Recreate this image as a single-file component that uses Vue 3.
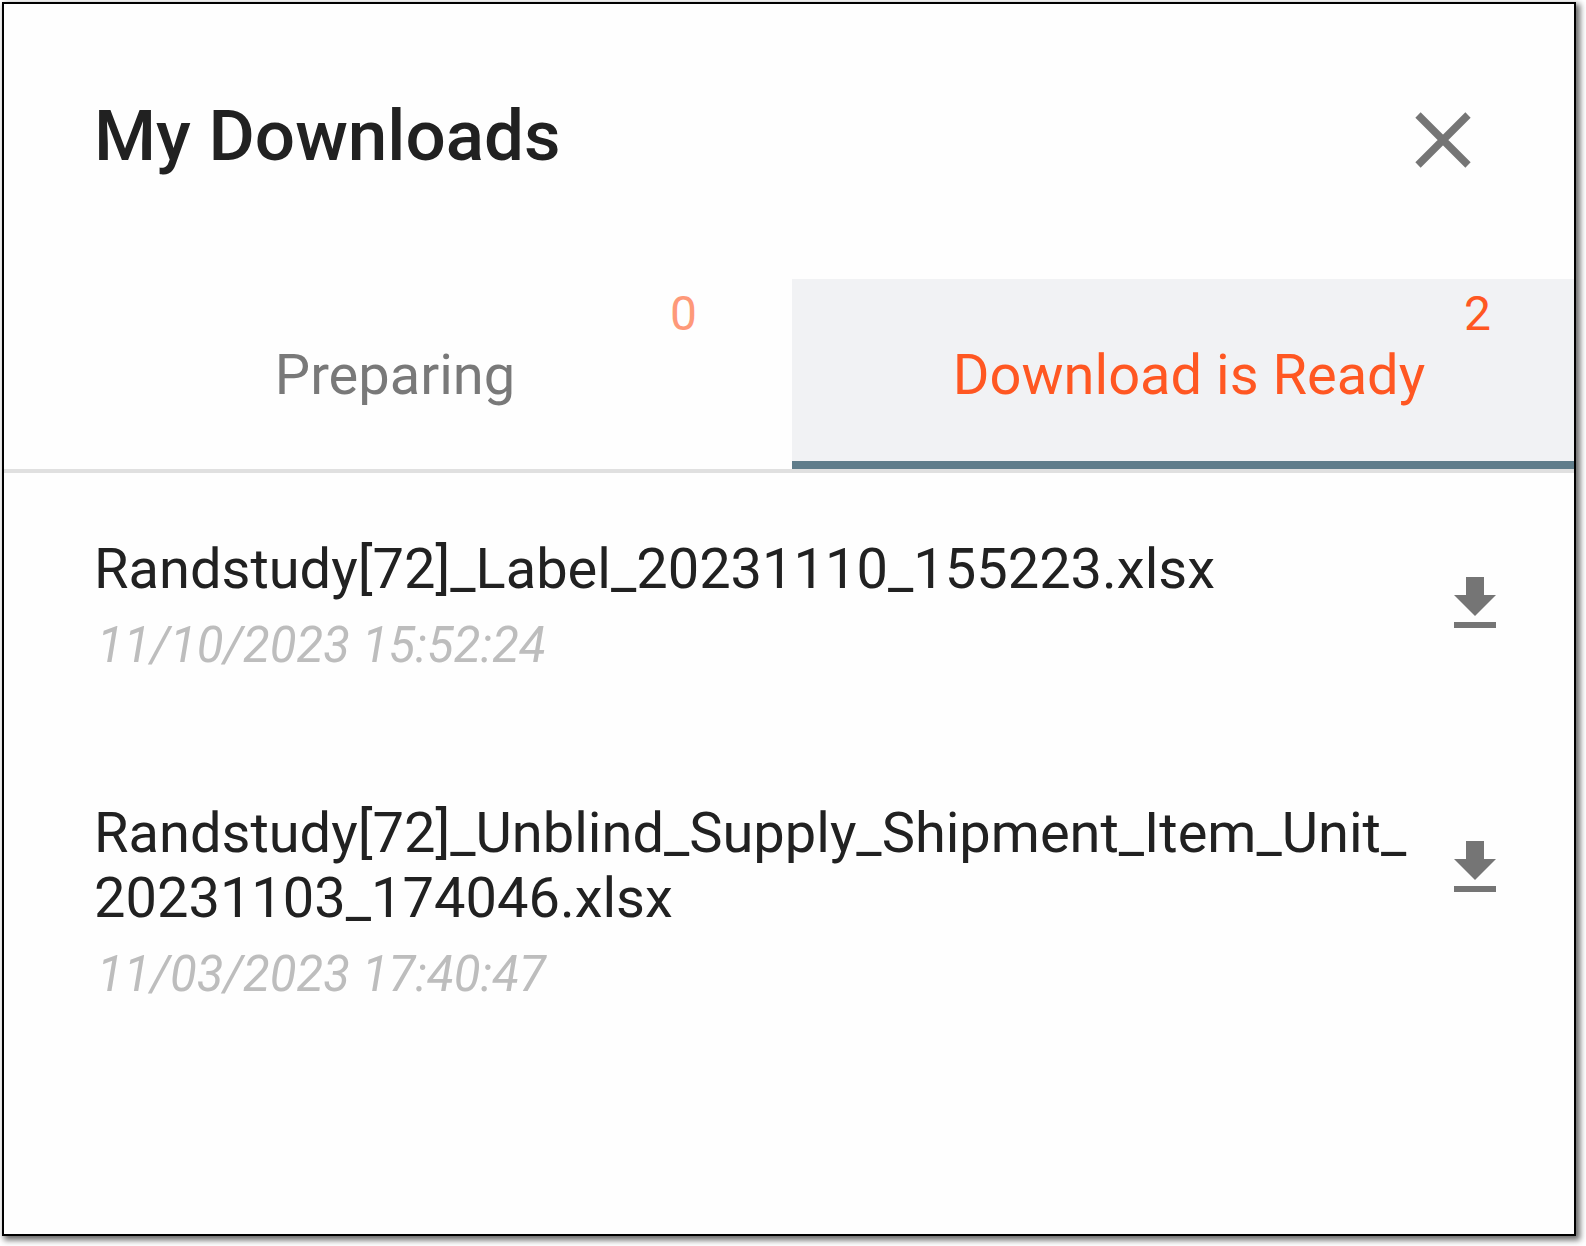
<template>
  <section class="downloads">
    <header class="downloads-header">
      <h1 class="title">My Downloads</h1>
      <button type="button" class="close-btn" aria-label="Close">
        <svg viewBox="0 0 56 56" width="56" height="56">
          <path d="M3 3l50 50M53 3L3 53" fill="none" stroke="currentColor" stroke-width="7.5" />
        </svg>
      </button>
    </header>

    <div class="tabs" role="tablist">
      <button
        v-for="tab in tabs"
        :key="tab.id"
        type="button"
        role="tab"
        class="tab"
        :class="{ active: tab.id === activeTab }"
        :aria-selected="tab.id === activeTab"
        @click="activeTab = tab.id"
      >
        <span class="tab-label">{{ tab.label }}</span>
        <span class="tab-count">{{ tab.files.length }}</span>
      </button>
    </div>

    <ul class="file-list">
      <li v-for="file in files" :key="file.name" class="file">
        <div class="file-info">
          <p class="file-name">{{ file.name }}</p>
          <p class="file-date">{{ file.date }}</p>
        </div>
        <button type="button" class="download-btn" :aria-label="'Download ' + file.name">
          <svg viewBox="0 0 24 24" width="72" height="72">
            <path d="M19 9h-4V3H9v6H5l7 7 7-7zM5 18v2h14v-2H5z" fill="currentColor" />
          </svg>
        </button>
      </li>
    </ul>
  </section>
</template>

<script setup>
import { computed, ref } from 'vue'

const tabs = [
  { id: 'preparing', label: 'Preparing', files: [] },
  {
    id: 'ready',
    label: 'Download is Ready',
    files: [
      { name: 'Randstudy[72]_Label_20231110_155223.xlsx', date: '11/10/2023 15:52:24' },
      {
        name: 'Randstudy[72]_Unblind_Supply_Shipment_Item_Unit_20231103_174046.xlsx',
        date: '11/03/2023 17:40:47'
      }
    ]
  }
]

const activeTab = ref('ready')
const files = computed(() => tabs.find((tab) => tab.id === activeTab.value).files)
</script>

<style>
body {
  margin: 0;
  background: #fff;
}
</style>

<style scoped>
.downloads {
  box-sizing: border-box;
  min-height: calc(100vh - 12px);
  margin: 2px 10px 10px 2px;
  border: 2px solid #000;
  background: #fefefe;
  box-shadow: 3px 3px 6px 1px rgba(0, 0, 0, 0.6);
  overflow: hidden;
  font-family: Roboto, "Liberation Sans", sans-serif;
  color: #212121;
}

button {
  padding: 0;
  border: none;
  background: none;
  font-family: inherit;
  cursor: pointer;
}

svg {
  display: block;
}

.downloads-header {
  display: flex;
  align-items: flex-start;
  justify-content: space-between;
  padding: 90px 103px 101px 90px;
}

.title {
  margin: 0;
  font-size: 71px;
  font-weight: 500;
  line-height: 84px;
}

.close-btn {
  margin-top: 18px;
  color: #757575;
}

/* the strip runs slightly past both edges of the panel */
.tabs {
  display: grid;
  grid-template-columns: 1fr 1fr;
  margin: 0 -12px 0 -6px;
  border-bottom: 4px solid #e0e0e0;
}

.tab {
  position: relative;
  padding: 64px 0 54px;
  border-bottom: 8px solid transparent;
  color: #212121;
  opacity: 0.6;
}

.tab.active {
  background: #f1f2f4;
  border-bottom-color: #607d8b;
  color: #ff5722;
  opacity: 1;
}

.tab-label {
  display: block;
  font-size: 56px;
  line-height: 64px;
}

.tab-count {
  position: absolute;
  top: 7px;
  right: 95px;
  font-size: 48px;
  line-height: 56px;
  color: #ff5722;
}

.file-list {
  display: flex;
  flex-direction: column;
  gap: 127px;
  margin: 0;
  padding: 64px 63px 64px 90px;
  list-style: none;
}

.file {
  display: flex;
  align-items: flex-start;
  gap: 28px;
}

.file-info {
  flex: 1;
  min-width: 0;
}

.file-name {
  margin: 0 0 16px;
  font-size: 56px;
  line-height: 65px;
  overflow-wrap: anywhere;
}

.file-date {
  margin: 0;
  padding-left: 3px;
  font-size: 49px;
  font-style: italic;
  line-height: 56px;
  color: #bdbdbd;
}

.download-btn {
  margin-top: 31px;
  color: #757575;
}
</style>
